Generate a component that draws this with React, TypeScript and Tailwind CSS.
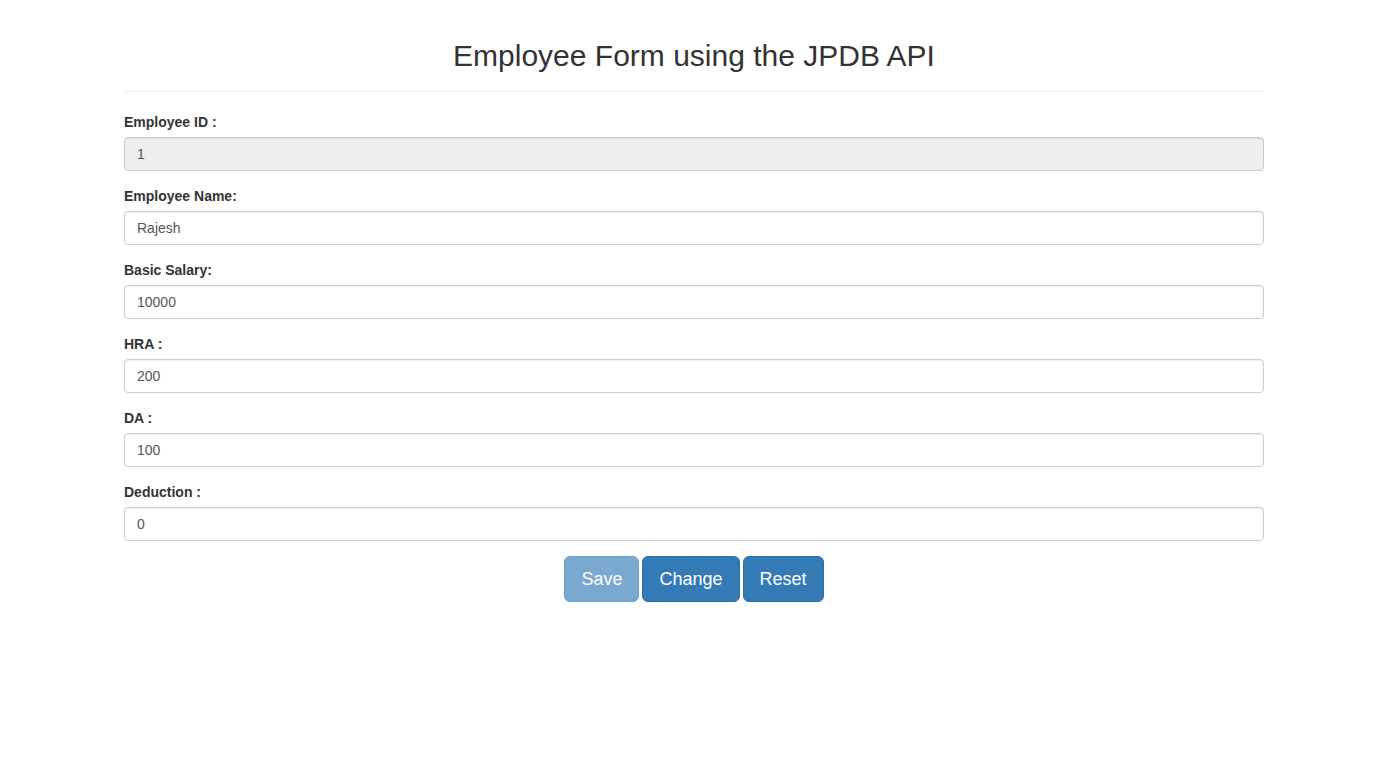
const FIELDS: { label: string; value: string; disabled?: boolean }[] = [
  { label: "Employee ID :", value: "1", disabled: true },
  { label: "Employee Name:", value: "Rajesh" },
  { label: "Basic Salary:", value: "10000" },
  { label: "HRA :", value: "200" },
  { label: "DA :", value: "100" },
  { label: "Deduction :", value: "0" },
];

export default function App() {
  return (
    <div className="min-h-screen bg-white text-[#333] font-['Liberation_Sans',Arial,sans-serif] text-sm">
      <div className="w-[1140px] ml-[124px]">
        <div className="pt-[39px] pb-[19px] border-b border-[#eee]">
          <h2 className="text-[30px] leading-[33px] text-center font-normal">
            Employee Form using the JPDB API
          </h2>
        </div>

        <form className="mt-[20px]" onSubmit={(e) => e.preventDefault()}>
          {FIELDS.map((f) => (
            <div key={f.label} className="mb-[15px]">
              <label className="block font-bold leading-5 mb-[5px]">{f.label}</label>
              <input
                type="text"
                defaultValue={f.value}
                disabled={f.disabled}
                className={`block w-full h-[34px] px-3 py-1.5 text-sm leading-5 text-[#555] border border-[#ccc] rounded shadow-[inset_0_1px_1px_rgba(0,0,0,0.075)] outline-none ${
                  f.disabled ? "bg-[#eee]" : "bg-white"
                }`}
              />
            </div>
          ))}

          <div className="flex justify-center gap-[3px]">
            <button
              type="button"
              disabled
              className="px-4 py-2.5 text-[18px] leading-6 text-white bg-[#337ab7] border border-[#2e6da4] rounded-md opacity-65"
            >
              Save
            </button>
            <button
              type="button"
              className="px-4 py-2.5 text-[18px] leading-6 text-white bg-[#337ab7] border border-[#2e6da4] rounded-md hover:bg-[#286090]"
            >
              Change
            </button>
            <button
              type="button"
              className="px-4 py-2.5 text-[18px] leading-6 text-white bg-[#337ab7] border border-[#2e6da4] rounded-md hover:bg-[#286090]"
            >
              Reset
            </button>
          </div>
        </form>
      </div>
    </div>
  );
}
